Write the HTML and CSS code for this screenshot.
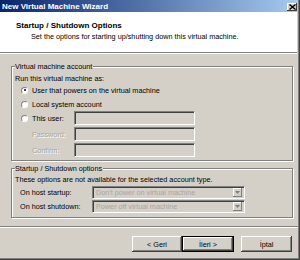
FILE: index.html
```html
<!DOCTYPE html>
<html>
<head>
<meta charset="utf-8">
<link rel="stylesheet" href="styles.css">
</head>
<body>
<div class="win">
  <div class="titlebar">
    <span class="title">New Virtual Machine Wizard</span>
    <span class="close">
      <svg width="7" height="6" viewBox="0 0 7 6"><path d="M0.5 0.5 L6.5 5.5 M6.5 0.5 L0.5 5.5" stroke="#000" stroke-width="1.4"/></svg>
    </span>
  </div>
  <div class="header">
    <div class="h-title">Startup / Shutdown Options</div>
    <div class="h-sub">Set the options for starting up/shutting down this virtual machine.</div>
  </div>
  <div class="body">
    <div class="group g1">
      <div class="legend">Virtual machine account</div>
      <div class="line">Run this virtual machine as:</div>
      <div class="radio-row r1"><span class="radio on"></span><span>User that powers on the virtual machine</span></div>
      <div class="radio-row r2"><span class="radio"></span><span>Local system account</span></div>
      <div class="radio-row r3"><span class="radio"></span><span class="lbl-user">This user:</span><span class="input"></span></div>
      <div class="field-row"><span class="lbl dis">Password:</span><span class="input"></span></div>
      <div class="field-row"><span class="lbl dis">Confirm:</span><span class="input"></span></div>
    </div>
    <div class="group g2">
      <div class="legend">Startup / Shutdown options</div>
      <div class="line">These options are not available for the selected account type.</div>
      <div class="sel-row s1"><span class="sel-lbl">On host startup:</span><span class="select"><span class="sel-text">Don't power on virtual machine</span><span class="arrow"><svg width="5" height="3" viewBox="0 0 5 3"><path d="M0 0H5L2.5 3Z" fill="#808080"/></svg></span></span></div>
      <div class="sel-row s2"><span class="sel-lbl">On host shutdown:</span><span class="select"><span class="sel-text">Power off virtual machine</span><span class="arrow"><svg width="5" height="3" viewBox="0 0 5 3"><path d="M0 0H5L2.5 3Z" fill="#808080"/></svg></span></span></div>
    </div>
    <div class="sep"></div>
    <div class="buttons">
      <span class="btn">&lt; Geri</span>
      <span class="btn def">İleri &gt;</span>
      <span class="btn cancel">İptal</span>
    </div>
  </div>
</div>
</body>
</html>
```

FILE: styles.css
```css
html, body {
  margin: 0;
  padding: 0;
  background: #D4D0C8;
}
.win {
  width: 300px;
  height: 260px;
  box-sizing: border-box;
  background: #D4D0C8;
  font-family: "Liberation Sans", Arial, sans-serif;
  font-size: 7.25px;
  line-height: 9px;
  color: #000;
  display: flex;
  flex-direction: column;
  padding-right: 2px;
  padding-bottom: 3px;
  box-shadow: inset -1px -1px 0 #404040, inset -2px -2px 0 #808080;
}
.titlebar {
  height: 12px;
  flex: none;
  background: linear-gradient(to right, #0A246A, #A6CAF0);
  display: flex;
  align-items: center;
  justify-content: space-between;
  padding-left: 2px;
  padding-right: 1px;
}
.title {
  color: #fff;
  font-weight: bold;
  font-size: 8px;
}
.close {
  width: 10px;
  height: 8px;
  margin-top: 2px;
  box-sizing: border-box;
  background: #D4D0C8;
  box-shadow: inset -1px -1px 0 #404040, inset 1px 1px 0 #fff;
  display: flex;
  align-items: center;
  justify-content: center;
}
.header {
  height: 41px;
  flex: none;
  background: #fff;
  border-bottom: 1px solid #808080;
  box-shadow: 0 1px 0 #fff;
  box-sizing: border-box;
  padding-top: 9px;
  margin-right: 1px;
}
.h-title {
  font-weight: bold;
  font-size: 8px;
  padding-left: 16px;
}
.h-sub {
  padding-left: 31px;
  margin-top: 2px;
}
.body {
  flex: 1;
  padding: 13px 5px 0 11px;
  display: flex;
  flex-direction: column;
}
.group {
  border: 1px solid #808080;
  box-shadow: inset 1px 1px 0 #fff, 1px 1px 0 #fff;
  padding: 0 0 0 3px;
}
.legend {
  background: #D4D0C8;
  width: max-content;
  margin-top: -5px;
  padding: 0 1px 0 0;
  position: relative;
}
.g1 {
  height: 95px;
  box-sizing: border-box;
}
.line {
  margin-top: 3px;
}
.radio-row {
  display: flex;
  align-items: center;
  height: 14px;
  padding-left: 6px;
}
.radio {
  width: 7px;
  height: 7px;
  box-sizing: border-box;
  border-radius: 50%;
  background: #fff;
  border: 1px solid;
  border-color: #808080 #fff #fff #808080;
  margin-right: 4px;
  display: flex;
  align-items: center;
  justify-content: center;
  flex: none;
}
.radio.on::after {
  content: "";
  width: 2px;
  height: 2px;
  background: #000;
  border-radius: 50%;
}
.lbl-user {
  width: 42px;
}
.input {
  width: 121px;
  height: 14px;
  box-sizing: border-box;
  border: 1px solid;
  border-color: #808080 #fff #fff #808080;
  box-shadow: inset 1px 1px 0 #404040, inset -1px -1px 0 #D4D0C8;
  background: #D4D0C8;
}
.field-row {
  display: flex;
  align-items: center;
  margin-top: 2px;
  padding-left: 17px;
}
.lbl {
  width: 42px;
}
.dis {
  color: #A8A59E;
  text-shadow: 1px 1px 0 #fff;
}
.g2 {
  margin-top: 7px;
  height: 50px;
  box-sizing: border-box;
}
.g2 .line {
  margin-top: 2px;
}
.sel-row {
  display: flex;
  align-items: center;
  padding-left: 5px;
  height: 14px;
}
.s1 {
  margin-top: 1px;
}
.sel-lbl {
  width: 72px;
}
.select {
  width: 153px;
  height: 13px;
  box-sizing: border-box;
  border: 1px solid;
  border-color: #808080 #fff #fff #808080;
  box-shadow: inset 1px 1px 0 #404040, inset -1px -1px 0 #D4D0C8;
  display: flex;
  align-items: center;
  justify-content: space-between;
  padding: 2px 2px 2px 3px;
}
.sel-text {
  color: #A8A59E;
}
.arrow {
  width: 9px;
  height: 9px;
  box-sizing: border-box;
  background: #D4D0C8;
  box-shadow: inset -1px -1px 0 #808080, inset 1px 1px 0 #fff;
  display: flex;
  align-items: center;
  justify-content: center;
}
.sep {
  margin: 8px -5px 0 -11px;
  border-top: 1px solid #808080;
  border-bottom: 1px solid #fff;
  height: 0;
}
.buttons {
  display: flex;
  margin-top: 8px;
  padding-left: 121px;
}
.btn {
  width: 50px;
  height: 16px;
  box-sizing: border-box;
  display: flex;
  align-items: center;
  justify-content: center;
  box-shadow: inset -1px -1px 0 #404040, inset 1px 1px 0 #fff, inset -2px -2px 0 #808080;
}
.btn.def {
  width: 52px;
  border: 1px solid #000;
}
.btn.cancel {
  width: 51px;
  margin-left: 7px;
}
```
